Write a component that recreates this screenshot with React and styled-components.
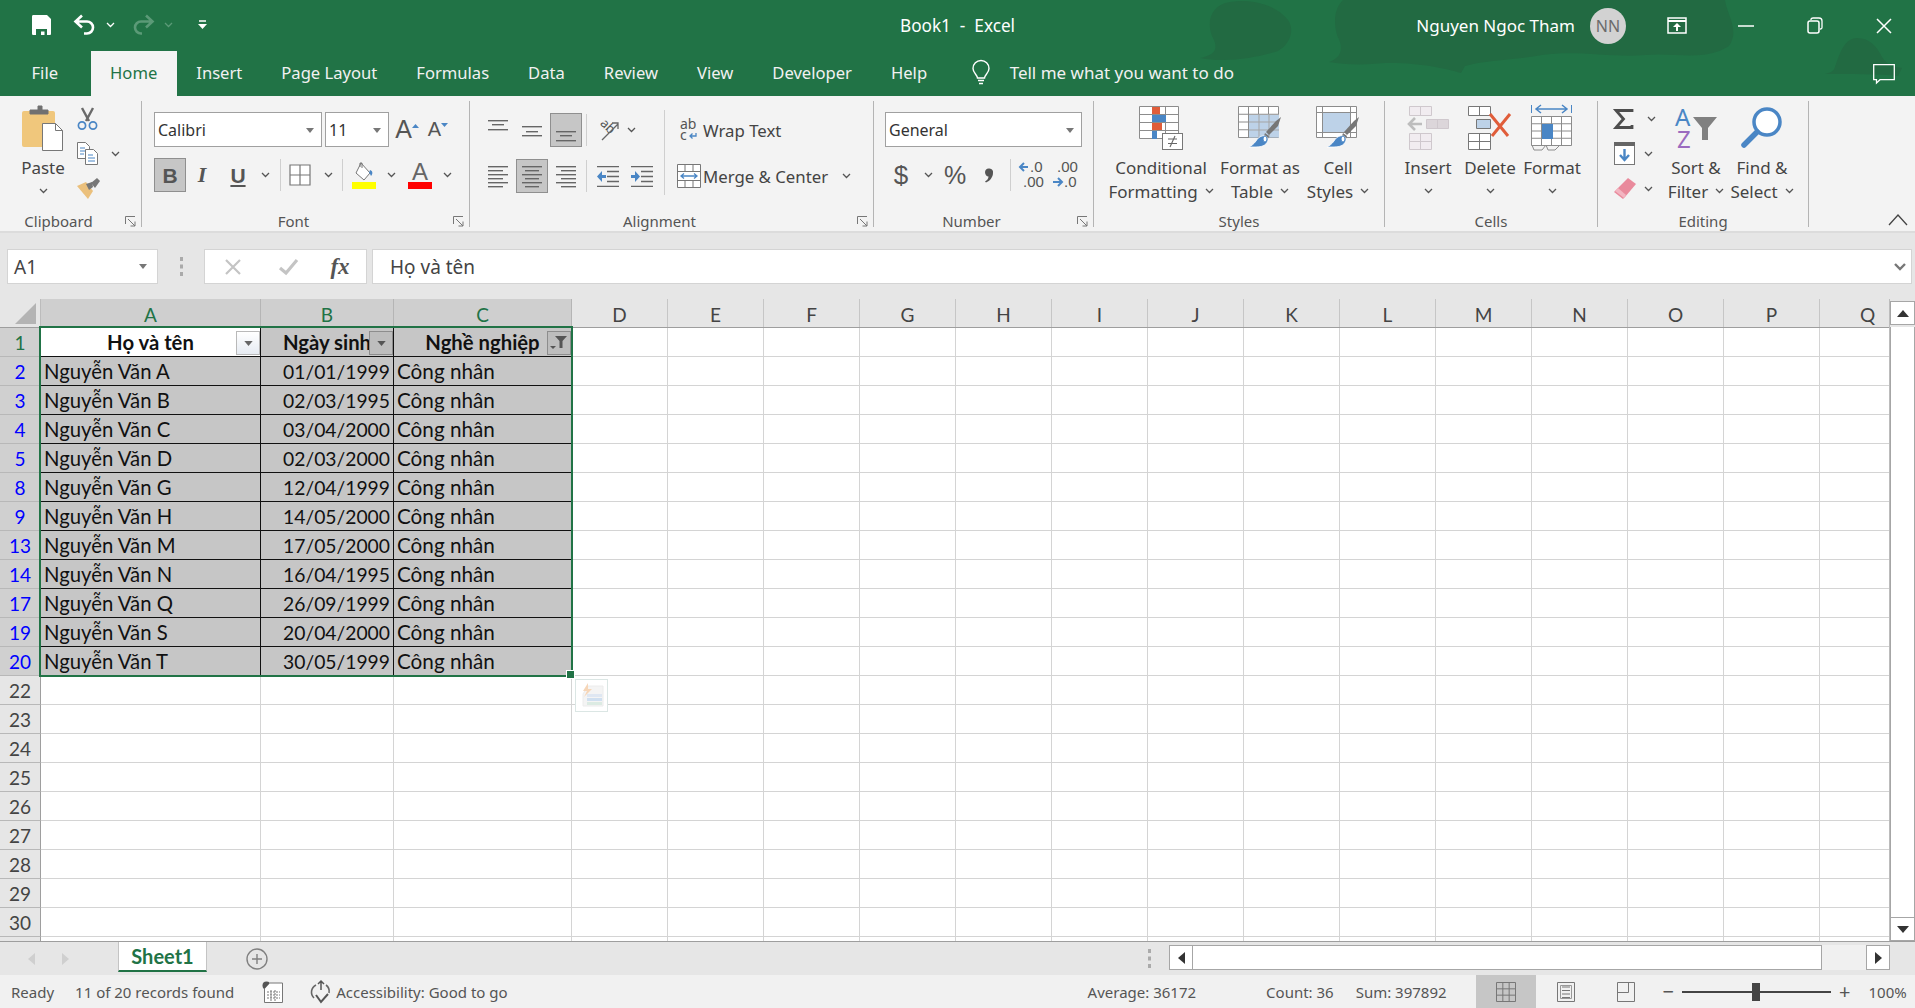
import React from "react";
import styled, { createGlobalStyle } from "styled-components";

const GlobalStyle = createGlobalStyle`
  html, body { margin: 0; padding: 0; width: 1915px; height: 1008px; overflow: hidden; }
  body { font-family: "Noto Sans", "Open Sans", sans-serif; color: #444; }
  svg { overflow: visible; }
`;

const Page = styled.div`
  width: 1915px;
  height: 1008px;
  display: flex;
  flex-direction: column;
  background: #e6e6e6;
  overflow: hidden;
`;

/* ---------- title bar + tabs ---------- */
const Head = styled.header`
  position: relative;
  height: 96px;
  background: #217346;
  color: #fff;
  flex: none;
`;
const HeadArt = styled.svg`
  position: absolute;
  right: 0;
  top: 0;
`;
const TitleRow = styled.div`
  position: relative;
  height: 51px;
  display: grid;
  grid-template-columns: 1fr auto 1fr;
  align-items: center;
`;
const Qat = styled.div`
  display: flex;
  align-items: center;
  padding-left: 32px;
  margin-top: -2px;
`;
const Title = styled.div`
  font-size: 17.2px;
  white-space: pre;
`;
const Account = styled.div`
  display: flex;
  align-items: center;
  justify-content: flex-end;
  padding-right: 1px;
`;
const UserName = styled.span`
  font-size: 17px;
  margin-right: 15px;
`;
const Avatar = styled.div`
  width: 36px;
  height: 36px;
  border-radius: 50%;
  background: #d2d2d2;
  color: #6b6b6b;
  font-size: 16px;
  display: flex;
  align-items: center;
  justify-content: center;
  margin-right: 21px;
`;
const WinBtn = styled.div`
  width: 60px;
  display: flex;
  justify-content: center;
  margin-left: ${(p) => (p.$first ? 0 : 9)}px;
`;
const TabRow = styled.nav`
  position: relative;
  height: 45px;
  display: flex;
  align-items: stretch;
  padding-left: 12px;
`;
const Tab = styled.div`
  display: flex;
  align-items: center;
  padding: 0 19.5px 2px;
  font-size: 16.6px;
  margin-right: ${(p) => p.$gap || 0}px;
  background: ${(p) => (p.$active ? "#f3f3f3" : "transparent")};
  color: ${(p) => (p.$active ? "#217346" : "#f1f1f1")};
`;
const TellMe = styled.div`
  display: flex;
  align-items: center;
  gap: 19px;
  margin-left: 24px;
  padding-bottom: 2px;
  font-size: 17px;
  color: #f1f1f1;
`;
const CommentBtn = styled.div`
  margin-left: auto;
  padding-right: 20px;
  display: flex;
  align-items: center;
`;

/* ---------- ribbon ---------- */
const Ribbon = styled.section`
  height: 137px;
  flex: none;
  display: flex;
  padding-top: 5px;
  box-sizing: border-box;
  background: #f3f3f3;
  border-bottom: 2px solid #dcdcdc;
  font-size: 17px;
  color: #444;
`;
const Group = styled.div`
  width: ${(p) => p.$w}px;
  height: 126px;
  box-sizing: border-box;
  border-right: 1px solid #b4b4b4;
  display: flex;
  flex-direction: column;
  flex: none;
`;
const GroupBody = styled.div`
  flex: 1;
  display: flex;
  min-height: 0;
  padding-left: ${(p) => p.$pad || 0}px;
`;
const GroupFoot = styled.div`
  height: 14px;
  display: grid;
  grid-template-columns: 1fr ${(p) => (p.$launch ? 24 : 0)}px;
  align-items: center;
  justify-items: center;
  font-size: 15px;
  color: #555;
  line-height: 14px;
  margin-bottom: -1px;
`;
const Launcher = styled.svg`
  justify-self: end;
  margin-right: 5px;
`;
const Big = styled.div`
  width: ${(p) => p.$w}px;
  margin-left: ${(p) => p.$ml || 0}px;
  display: flex;
  flex-direction: column;
  align-items: center;
  flex: none;
`;
const BigIcon = styled.div`
  height: 54px;
  display: flex;
  align-items: center;
  justify-content: center;
`;
const BigLine = styled.div`
  height: 24px;
  display: flex;
  align-items: center;
  gap: 7px;
  white-space: nowrap;
`;
const SmallCol = styled.div`
  width: ${(p) => p.$w}px;
  margin-left: ${(p) => p.$ml || 0}px;
  flex: none;
  display: flex;
  flex-direction: column;
`;
const SmallRow = styled.div`
  height: 35px;
  display: flex;
  align-items: center;
`;
const Slot = styled.div`
  width: ${(p) => p.$w}px;
  display: flex;
  justify-content: center;
  flex: none;
`;
const Stack = styled.div`
  display: flex;
  flex-direction: column;
  gap: 12px;
  padding-top: ${(p) => p.$top ?? 11}px;
`;
const ToolRow = styled.div`
  height: 34px;
  display: flex;
  align-items: center;
  white-space: nowrap;
`;
const Field = styled.div`
  box-sizing: border-box;
  width: ${(p) => p.$w}px;
  height: 35px;
  margin-right: ${(p) => p.$mr || 0}px;
  background: #fff;
  border: 1px solid #a0a0a0;
  display: flex;
  align-items: center;
  justify-content: space-between;
  padding: 2px 7px 0 3px;
  font-size: 16px;
  color: #333;
  flex: none;
`;
const Tool = styled.div`
  box-sizing: border-box;
  width: ${(p) => p.$w || 32}px;
  height: 34px;
  margin-right: ${(p) => p.$mr || 0}px;
  display: flex;
  align-items: center;
  justify-content: center;
  flex: none;
  background: ${(p) => (p.$on ? "#c6c6c6" : "transparent")};
  border: ${(p) => (p.$on ? "1px solid #8f8f8f" : "none")};
`;
const Glyph = styled.span`
  font-family: ${(p) => p.$font || `"Liberation Sans", sans-serif`};
  font-size: ${(p) => p.$size}px;
  font-weight: ${(p) => p.$weight || 400};
  font-style: ${(p) => p.$slant || "normal"};
  text-decoration: ${(p) => p.$deco || "none"};
  color: #555;
  line-height: 1;
`;
const Sep = styled.div`
  width: 1px;
  height: ${(p) => p.$h || 32}px;
  background: #cfcfcf;
  margin: 0 ${(p) => p.$mr ?? 5}px 0 ${(p) => p.$ml ?? 5}px;
  flex: none;
`;
const TallSep = styled.div`
  width: 1px;
  height: 85px;
  margin: 9px ${(p) => p.$mr}px 0 ${(p) => p.$ml}px;
  background: #cfcfcf;
  flex: none;
`;
const ToolLabel = styled.span`
  font-size: 16.8px;
  color: #444;
  margin-right: ${(p) => p.$mr || 0}px;
`;
const Collapse = styled.div`
  flex: 1;
  display: flex;
  align-items: flex-end;
  justify-content: flex-end;
  padding-right: 7px;
  height: 125px;
`;

/* ---------- formula bar ---------- */
const FormulaBar = styled.div`
  height: 66px;
  flex: none;
  box-sizing: border-box;
  padding: 16px 3px 0 7px;
  display: flex;
  align-items: flex-start;
  background: #e6e6e6;
`;
const NameBox = styled.div`
  box-sizing: border-box;
  width: 151px;
  height: 35px;
  background: #fff;
  border: 1px solid #d4d4d4;
  display: flex;
  align-items: center;
  justify-content: space-between;
  padding: 0 10px 0 6px;
  font-size: 19px;
  color: #444;
`;
const Dots = styled.div`
  width: 46px;
  height: 35px;
  display: flex;
  align-items: center;
  justify-content: center;
`;
const FnBox = styled.div`
  box-sizing: border-box;
  width: 163px;
  height: 35px;
  background: #fff;
  border: 1px solid #d4d4d4;
  display: flex;
  align-items: center;
  margin-right: 5px;
`;
const FormulaInput = styled.div`
  flex: 1;
  box-sizing: border-box;
  height: 35px;
  background: #fff;
  border: 1px solid #d4d4d4;
  display: flex;
  align-items: center;
  justify-content: space-between;
  padding: 0 5px 0 17px;
  font-size: 19px;
  color: #444;
`;

/* ---------- sheet ---------- */
const COLS = "41px 220px 133px 178px repeat(14, 96px)";
const SheetArea = styled.div`
  height: 642px;
  flex: none;
  display: flex;
  border-bottom: 1px solid #9e9e9e;
  box-sizing: content-box;
`;
const Grid = styled.div`
  position: relative;
  width: 1890px;
  height: 642px;
  overflow: hidden;
  background: #fff;
  font-family: Lato, "Noto Sans", sans-serif;
  font-size: 20.7px;
  color: #111;
  border-right: 1px solid #bcbcbc;
  box-sizing: border-box;
`;
const HeadRow = styled.div`
  display: grid;
  grid-template-columns: ${COLS};
  height: 28px;
  background: #e6e6e6;
  border-bottom: 1px solid #9e9e9e;
  box-sizing: content-box;
  margin-bottom: -1px;
`;
const Corner = styled.div`
  border-right: 1px solid #bcbcbc;
  display: flex;
  align-items: flex-end;
  justify-content: flex-end;
  padding: 0 4px 3px 0;
`;
const ColHead = styled.div`
  display: flex;
  align-items: center;
  justify-content: center;
  padding-top: 3px;
  box-sizing: border-box;
  font-size: 19px;
  background: ${(p) => (p.$sel ? "#cfcfcf" : "#e6e6e6")};
  color: ${(p) => (p.$sel ? "#217346" : "#444")};
  border-right: 1px solid ${(p) => (p.$sel ? "#b5b5b5" : "#c6c6c6")};
`;
const HeadGap = styled.div`
  height: 1px;
`;
const Row = styled.div`
  display: grid;
  grid-template-columns: ${COLS};
  height: 29px;
`;
const RowHead = styled.div`
  box-sizing: border-box;
  display: flex;
  align-items: center;
  justify-content: center;
  font-size: 19px;
  background: ${(p) => (p.$sel ? "#d0d0d0" : "#e6e6e6")};
  color: ${(p) => p.$color || "#444"};
  border-right: 1px solid #9e9e9e;
  border-bottom: 1px solid #b8b8b8;
`;
const Cell = styled.div`
  position: relative;
  box-sizing: border-box;
  display: flex;
  align-items: center;
  overflow: hidden;
  white-space: pre;
  padding: 0 3px;
  justify-content: ${(p) => p.$align || "flex-start"};
  font-size: ${(p) => (p.$size ? `${p.$size}px` : "inherit")};
  font-weight: ${(p) => (p.$bold ? 700 : 400)};
  background: ${(p) => (p.$fill ? "#c6c6c6" : "#fff")};
  border-right: 1px solid ${(p) => (p.$ink ? "#111" : "#d4d4d4")};
  border-bottom: 1px solid ${(p) => (p.$ink ? "#111" : "#d4d4d4")};
`;
const FilterBtn = styled.div`
  position: absolute;
  right: 0;
  top: 3px;
  width: 24px;
  height: 24px;
  box-sizing: border-box;
  display: flex;
  align-items: center;
  justify-content: center;
  background: ${(p) => (p.$on ? "#bdbdbd" : "linear-gradient(#fff, #e6ebf2)")};
  border: 1px solid ${(p) => (p.$on ? "#8d8d8d" : "#b9b9b9")};
`;
const SelectionBox = styled.div`
  position: absolute;
  left: 39px;
  top: 27px;
  width: 534px;
  height: 351px;
  box-sizing: border-box;
  border: 2px solid #217346;
  pointer-events: none;
`;
const SelectionHandle = styled.div`
  position: absolute;
  right: -4px;
  bottom: -4px;
  width: 7px;
  height: 7px;
  background: #217346;
  border: 1px solid #fff;
`;
const QuickBtn = styled.div`
  position: absolute;
  left: 575px;
  top: 380px;
  width: 33px;
  height: 33px;
  box-sizing: border-box;
  background: #fff;
  border: 1px solid #dbe6e4;
  display: flex;
  align-items: center;
  justify-content: center;
`;
const VScroll = styled.div`
  flex: 1;
  display: flex;
  flex-direction: column;
  justify-content: space-between;
  padding-top: 2px;
  background: #e6e6e6;
`;
const VButton = styled.div`
  box-sizing: border-box;
  height: 24px;
  background: #fff;
  border: 1px solid #a6a6a6;
  display: flex;
  align-items: center;
  justify-content: center;
`;
const VThumb = styled.div`
  flex: 1;
  background: #fff;
  border: 1px solid #a6a6a6;
  border-top: none;
  border-bottom: none;
  margin-top: 2px;
`;

/* ---------- sheet tabs + status ---------- */
const TabBar = styled.div`
  height: 33px;
  flex: none;
  display: flex;
  align-items: stretch;
  background: #e6e6e6;
`;
const TabNav = styled.div`
  width: 118px;
  display: flex;
  align-items: center;
  gap: 27px;
  padding-left: 28px;
  box-sizing: border-box;
`;
const SheetTab = styled.div`
  width: 89px;
  height: 30px;
  box-sizing: border-box;
  background: #fff;
  border-left: 1px solid #c4c4c4;
  border-right: 1px solid #c4c4c4;
  border-bottom: 2px solid #217346;
  color: #217346;
  font-family: Lato, "Noto Sans", sans-serif;
  font-weight: 700;
  font-size: 20px;
  display: flex;
  align-items: center;
  justify-content: center;
`;
const AddSheet = styled.div`
  margin-left: 39px;
  display: flex;
  align-items: center;
`;
const Splitter = styled.div`
  margin-left: auto;
  margin-right: 10px;
  width: 20px;
  display: flex;
  align-items: center;
  justify-content: center;
`;
const HScroll = styled.div`
  width: 721px;
  margin: 3px 25px 5px 0;
  display: flex;
  background: #f0f0f0;
`;
const HButton = styled.div`
  box-sizing: border-box;
  width: 24px;
  background: #fff;
  border: 1px solid #a6a6a6;
  display: flex;
  align-items: center;
  justify-content: center;
  margin-left: ${(p) => (p.$end ? "auto" : 0)};
`;
const HThumb = styled.div`
  box-sizing: border-box;
  width: 629px;
  background: #fff;
  border: 1px solid #a6a6a6;
  border-left: none;
`;
const Status = styled.footer`
  height: 33px;
  flex: none;
  display: flex;
  align-items: center;
  background: #f1f1f1;
  font-size: 15px;
  color: #555;
  white-space: nowrap;
`;
const StatusText = styled.span`
  margin-left: ${(p) => p.$ml}px;
  flex: none;
`;
const StatusIcon = styled.div`
  margin-left: ${(p) => p.$ml}px;
  display: flex;
  align-items: center;
  flex: none;
`;
const ViewBtn = styled.div`
  width: 60px;
  height: 33px;
  margin-left: ${(p) => p.$ml || 0}px;
  display: flex;
  align-items: center;
  justify-content: center;
  flex: none;
  background: ${(p) => (p.$on ? "#c6c6c6" : "transparent")};
`;
const Zoom = styled.div`
  position: relative;
  width: 149px;
  height: 2px;
  background: #444;
  margin: 0 8px;
  flex: none;
`;
const ZoomKnob = styled.div`
  position: absolute;
  left: 70px;
  top: -8px;
  width: 8px;
  height: 18px;
  background: #444;
`;
const ZoomSign = styled.span`
  font-size: 20px;
  line-height: 1;
  margin-left: ${(p) => p.$ml || 0}px;
  flex: none;
`;

/* ---------- icons ---------- */
const BLUE = "#4a86c5";

const Chev = ({ color = "#555" }) => (
  <svg width="9" height="6" viewBox="0 0 9 6">
    <path d="M1 1l3.500 3.500L8 1" fill="none" stroke={color} strokeWidth="1.300" />
  </svg>
);
const DropTri = ({ color = "#777", w = 8, h = 5 }) => (
  <svg width={w} height={h} viewBox="0 0 10 6">
    <path d="M0 0h10L5 6z" fill={color} />
  </svg>
);
const Lines = ({ rows, w = 20, h = 21, color = "#666" }) => (
  <svg width={w} height={h} viewBox={`0 0 ${w} ${h}`}>
    {rows.map(([a, b, y]) => (
      <rect key={y} x={a} y={y} width={b - a} height="1.400" fill={color} />
    ))}
  </svg>
);
const LaunchIcon = () => (
  <Launcher width="11" height="11" viewBox="0 0 11 11">
    <path d="M.5 8V.5H10M3 3l7 7M10 5.500V10H5.500" fill="none" stroke="#777" />
  </Launcher>
);
const grid = (x, y, w, h, cols, rows) => {
  let d = `M${x} ${y}h${w}v${h}h${-w}z`;
  for (let i = 1; i < cols; i++) d += `M${x + (w / cols) * i} ${y}v${h}`;
  for (let i = 1; i < rows; i++) d += `M${x} ${y + (h / rows) * i}h${w}`;
  return d;
};

const SaveIcon = () => (
  <svg width="19" height="20" viewBox="0 0 19 20">
    <path d="M0 1.500C0 .5.5 0 1.500 0H15l4 4v14.500c0 1-.5 1.500-1.500 1.500h-16C.5 20 0 19.500 0 18.500z" fill="#fff" />
    <path d="M4 20v-6h11v6h-2.500v-3.500H9V20z" fill="#217346" />
  </svg>
);
const UndoIcon = ({ color = "#fff" }) => (
  <svg width="23" height="21" viewBox="0 0 23 21">
    <path d="M9 1.500L2.500 7.500 9 13.500M3 7.500h11a6 6 0 0 1 0 12h-3" fill="none" stroke={color} strokeWidth="2.600" />
  </svg>
);
const RedoIcon = () => (
  <svg width="23" height="21" viewBox="0 0 23 21">
    <path d="M14 1.500l6.500 6-6.500 6M20 7.500H9a6 6 0 0 0 0 12h1" fill="none" stroke="#5b9a77" strokeWidth="2.600" />
  </svg>
);
const CustomizeIcon = () => (
  <svg width="9" height="10" viewBox="0 0 9 10">
    <path d="M1 1h7" stroke="#fff" strokeWidth="1.500" />
    <path d="M0 4h9L4.500 9z" fill="#fff" />
  </svg>
);
const BulbIcon = () => (
  <svg width="20" height="25" viewBox="0 0 20 25">
    <path d="M6.500 18c0-3-4.500-5-4.500-9.500a8 8 0 0 1 16 0C18 13 13.500 15 13.500 18z" fill="none" stroke="#fff" strokeWidth="1.400" />
    <path d="M7 20.500h6M8 23.500h4" stroke="#fff" strokeWidth="1.600" />
  </svg>
);
const RibbonDisplayIcon = () => (
  <svg width="20" height="17" viewBox="0 0 20 17">
    <path d="M1 1h18v15H1z" fill="none" stroke="#fff" strokeWidth="1.500" />
    <path d="M1 4h18" stroke="#fff" strokeWidth="2" />
    <path d="M10 6l4 4h-3v4H9v-4H6z" fill="#fff" />
  </svg>
);
const MinIcon = () => (
  <svg width="16" height="16" viewBox="0 0 16 16">
    <path d="M0 8h16" stroke="#fff" strokeWidth="1.500" />
  </svg>
);
const MaxIcon = () => (
  <svg width="16" height="17" viewBox="0 0 16 17">
    <path d="M4 3V2.500C4 1.500 5 1 6 1h6c2 0 3 1 3 3v6.500c0 1-.5 1.500-1.500 1.500H13" fill="none" stroke="#fff" strokeWidth="1.300" />
    <rect x="1" y="4" width="11" height="12" rx="2" fill="none" stroke="#fff" strokeWidth="1.500" />
  </svg>
);
const CloseIcon = () => (
  <svg width="16" height="16" viewBox="0 0 16 16">
    <path d="M1 1l14 14M15 1L1 15" stroke="#fff" strokeWidth="1.500" />
  </svg>
);
const CommentIcon = () => (
  <svg width="22" height="20" viewBox="0 0 22 20">
    <path d="M.7.700h20.600v15H7L3.500 19v-3.300H.7z" fill="none" stroke="#fff" strokeWidth="1.300" />
  </svg>
);
const PasteIcon = () => (
  <svg width="42" height="46" viewBox="0 0 42 46">
    <rect x="0" y="6" width="33" height="36" rx="2" fill="#f0c77c" />
    <path d="M8 9V5h8V1h4v4h6v4z" fill="#707070" stroke="#707070" />
    <path d="M20.500 18.500h13l7 7v20h-20z" fill="#fff" stroke="#777" />
    <path d="M33.500 18.500v7h7" fill="none" stroke="#777" />
  </svg>
);
const ScissorsIcon = () => (
  <svg width="21" height="22" viewBox="0 0 21 22">
    <path d="M5 0l7 13M16 0L9 13" stroke="#6a6a6a" strokeWidth="2.400" />
    <circle cx="5" cy="17.500" r="3.600" fill="none" stroke={BLUE} strokeWidth="1.700" />
    <circle cx="16" cy="17.500" r="3.600" fill="none" stroke={BLUE} strokeWidth="1.700" />
  </svg>
);
const CopyIcon = () => (
  <svg width="21" height="23" viewBox="0 0 21 23">
    <path d="M.5.500h8l4 4v12H.5z" fill="#fff" stroke="#777" />
    <path d="M8.500 7.500h8l4 4v11h-12z" fill="#fff" stroke="#777" />
    <path d="M3 6h5M3 9h5M3 12h4M11 13h5M11 16h7M11 19h7" stroke={BLUE} />
  </svg>
);
const PainterIcon = () => (
  <svg width="24" height="21" viewBox="0 0 24 21">
    <path d="M0 8l9-4 7 9-5 8z" fill="#ebc07c" />
    <path d="M9 6l6-2 1 5-4 3z" fill="#777" />
    <path d="M14 5l6-5 3 3-5 7z" fill="#777" />
  </svg>
);
const BordersIcon = () => (
  <svg width="22" height="22" viewBox="0 0 22 22">
    <path d={grid(1, 1, 20, 20, 2, 2)} fill="#fff" stroke="#777" strokeWidth="1.200" />
  </svg>
);
const FillIcon = () => (
  <svg width="24" height="27" viewBox="0 0 24 27">
    <path d="M9 1l9 10-6 7-8-7z" fill="#fff" stroke="#777" />
    <path d="M8 5V1h2v5" fill="none" stroke="#777" />
    <path d="M18 8c3 1 3 4 1 6-1-2-1-3-2-3z" fill={BLUE} />
    <rect y="20" width="24" height="7" fill="#ffff00" />
  </svg>
);
const FontColorIcon = () => (
  <svg width="24" height="28" viewBox="0 0 24 28">
    <text x="12" y="19" textAnchor="middle" fontSize="24" fill="#666" fontFamily="Liberation Sans">A</text>
    <rect y="21" width="24" height="7" fill="#f00" />
  </svg>
);
const OrientIcon = () => (
  <svg width="24" height="24" viewBox="0 0 24 24">
    <text x="2" y="9" fontSize="13" fill="#555" fontFamily="Noto Sans" transform="rotate(45 6 8)">ab</text>
    <path d="M5 22L21 6M15 5h6v6" fill="none" stroke="#666" strokeWidth="1.300" />
  </svg>
);
const WrapIcon = () => (
  <svg width="18" height="22" viewBox="0 0 18 22">
    <text x="0" y="10" fontSize="14" fill="#555" fontFamily="Noto Sans">ab</text>
    <text x="0" y="21" fontSize="14" fill="#555" fontFamily="Noto Sans">c</text>
    <path d="M16 14v3H10M12.500 14.500L10 17l2.500 2.500" fill="none" stroke={BLUE} strokeWidth="1.300" />
  </svg>
);
const MergeIcon = () => (
  <svg width="24" height="24" viewBox="0 0 24 24">
    <path d="M.5.500h23v23H.5zM.5 7.500h23M.5 16.500h23M8 .5v7M16 .5v7M8 16.500v7M16 16.500v7" fill="#fff" stroke="#777" />
    <path d="M4 12h16M7 9.500L4 12l3 2.500M17 9.500l3 2.500-3 2.500" fill="none" stroke={BLUE} strokeWidth="1.300" />
  </svg>
);
const IndentIcon = ({ out }) => (
  <svg width="22" height="21" viewBox="0 0 22 21">
    <path d="M0 .7h22M10 5.500h12M10 10.500h12M10 15.500h12M0 20.300h22" stroke="#666" strokeWidth="1.300" />
    <path d={out ? "M9 9H5V5L0 10.500 5 16v-4h4z" : "M0 9h4V5l5 5.500-5 5.500v-4H0z"} fill={BLUE} />
  </svg>
);
const CommaIcon = () => (
  <svg width="10" height="16" viewBox="0 0 10 16">
    <path d="M1 5a4 4 0 1 1 8 1c0 4-3 8-7 9.500l-1-1c2-1 3.500-3 3.500-5C2.500 9.500 1 7.500 1 5z" fill="#555" />
  </svg>
);
const DecIcon = ({ up }) => (
  <svg width="28" height="30" viewBox="0 0 28 30" fontFamily="Liberation Sans" fontSize="15" fill="#555">
    {up ? (
      <>
        <path d="M7 3L3 7l4 4M3 7h8" fill="none" stroke={BLUE} strokeWidth="2" />
        <text x="13" y="12">.0</text>
        <text x="6" y="27">.00</text>
      </>
    ) : (
      <>
        <text x="6" y="12">.00</text>
        <path d="M2 22h8M7 18l4 4-4 4" fill="none" stroke={BLUE} strokeWidth="2" />
        <text x="13" y="27">.0</text>
      </>
    )}
  </svg>
);
const CondIcon = () => (
  <svg width="44" height="44" viewBox="0 0 44 44">
    <path d={grid(.5, .5, 39, 32, 3, 4)} fill="#fff" stroke="#8c8c8c" />
    <rect x="13" y="1" width="8" height="7" fill="#e05d3a" />
    <rect x="13" y="9" width="14" height="7" fill={BLUE} />
    <rect x="13" y="17" width="10" height="7" fill="#e05d3a" />
    <rect x="13" y="25" width="5" height="8" fill={BLUE} />
    <rect x="23.500" y="27.500" width="20" height="16" fill="#fff" stroke="#777" />
    <path d="M29 33h9M29 37.500h9M36 30l-5 11" fill="none" stroke="#666" strokeWidth="1.100" />
  </svg>
);
const Brush = () => (
  <>
    <path d="M43 11l-3 9-9 9-3-3 10-11z" fill="#777" />
    <path d="M27 27l4 3-1 3-4-3z" fill="#777" />
    <path d="M24 30c3-1 6 1 6 4-1 4-4 7-12 7H11c2-1 5-3 7-6s3-4 6-5z" fill={BLUE} stroke="#fff" strokeWidth=".8" />
    <ellipse cx="27" cy="33" rx="2" ry="3" fill="#fff" stroke={BLUE} />
  </>
);
const TableIcon = () => (
  <svg width="45" height="44" viewBox="0 0 45 44">
    <path d={grid(.5, .5, 40, 31, 4, 4)} fill="#fff" stroke="#8c8c8c" />
    <path d="M11 8.500h30v23H11z" fill="#bdd2e8" />
    <path d="M11 8.500h30M11 16h30M11 24h30M21 8.500v23M31 8.500v23" stroke="#a5a5a5" />
    <Brush />
  </svg>
);
const CellStyleIcon = () => (
  <svg width="45" height="44" viewBox="0 0 45 44">
    <path d="M.5.500h40v31H.5zM.5 6.500h40M6.500.5v31M34.500.5v31M.5 26.500h40" fill="#fff" stroke="#8c8c8c" />
    <rect x="7" y="7" width="27" height="19" fill="#bdd2e8" />
    <Brush />
  </svg>
);
const InsertIcon = () => (
  <svg width="44" height="44" viewBox="0 0 44 44">
    <path d={grid(3.5, .5, 22, 9, 2, 1)} fill="#f1ecf0" stroke="#cfc8cd" />
    <path d={grid(3.5, 27.500, 22, 16, 2, 2)} fill="#f1ecf0" stroke="#cfc8cd" />
    <path d={grid(20.500, 13.500, 22, 9, 2, 1)} fill="#dcd6da" stroke="#cfc8cd" />
    <path d="M16 18H3M9 12l-6 6 6 6" fill="none" stroke="#bdbdbd" strokeWidth="2.600" />
  </svg>
);
const DeleteIcon = () => (
  <svg width="44" height="44" viewBox="0 0 44 44">
    <path d={grid(.5, .5, 22, 9, 2, 1)} fill="#fff" stroke="#777" />
    <path d={grid(.5, 27.500, 22, 16, 2, 2)} fill="#fff" stroke="#777" />
    <path d="M8.500 13.500h14v9h-14z" fill="#bdd2e8" stroke="#777" />
    <path d="M22 8l18 22M42 8L24 30" stroke="#e05d3a" strokeWidth="3" />
  </svg>
);
const FormatIcon = () => (
  <svg width="42" height="46" viewBox="0 0 42 46">
    <path d="M.5 0v8M40.500 0v8" stroke={BLUE} />
    <path d="M5 4h31M10 0L5 4l5 4M31 0l5 4-5 4" fill="none" stroke={BLUE} strokeWidth="1.500" />
    <path d={grid(.5, 11.500, 40, 29, 4, 4)} fill="#fff" stroke="#8c8c8c" />
    <rect x="11" y="19" width="11" height="15" fill={BLUE} />
    <path d="M1 40l2 5h8l4-5M15 40l2 5h7l5-5" fill="none" stroke="#8c8c8c" />
  </svg>
);
const SigmaIcon = () => (
  <svg width="19" height="20" viewBox="0 0 19 20">
    <path d="M18 3V1.500H2L9.500 10 2 18.500h16V16" fill="none" stroke="#4d4d4d" strokeWidth="2.800" />
  </svg>
);
const FillDownIcon = () => (
  <svg width="21" height="23" viewBox="0 0 21 23">
    <rect x=".5" y=".5" width="20" height="22" fill="#fff" stroke="#777" />
    <rect width="21" height="4" fill="#666" />
    <path d="M10.500 7v10M6 13l4.500 5 4.500-5" fill="none" stroke={BLUE} strokeWidth="2.400" />
  </svg>
);
const EraserIcon = () => (
  <svg width="22" height="21" viewBox="0 0 22 21">
    <path d="M14 0l8 6-11 13-2 2-9-7z" fill="#e98a9c" />
    <path d="M4 10l8 7-2 3-9-7z" fill="#f3b5c1" />
  </svg>
);
const SortIcon = () => (
  <svg width="43" height="42" viewBox="0 0 43 42" fontFamily="Noto Sans" fontSize="24">
    <text x="0" y="19" fill={BLUE}>A</text>
    <text x="2" y="41" fill="#9b6bbf">Z</text>
    <path d="M18 10h24l-9 11v12h-6V21z" fill="#808080" />
  </svg>
);
const FindIcon = () => (
  <svg width="42" height="42" viewBox="0 0 42 42">
    <circle cx="26" cy="15" r="13" fill="#fff" stroke={BLUE} strokeWidth="3.500" />
    <path d="M16 25L3 38" stroke={BLUE} strokeWidth="5.500" strokeLinecap="round" />
  </svg>
);
const CaretUp = () => (
  <svg width="20" height="12" viewBox="0 0 20 12">
    <path d="M1 11l9-10 9 10" fill="none" stroke="#444" strokeWidth="1.300" />
  </svg>
);
const ThreeDots = ({ color = "#aaa" }) => (
  <svg width="3" height="19" viewBox="0 0 3 19">
    <path d="M0 0h3v4H0zM0 7.500h3v4H0zM0 15h3v4H0z" fill={color} />
  </svg>
);
const CancelMark = () => (
  <svg width="16" height="16" viewBox="0 0 16 16">
    <path d="M1 1l14 14M15 1L1 15" stroke="#c4c4c4" strokeWidth="2.200" />
  </svg>
);
const CheckMark = () => (
  <svg width="19" height="16" viewBox="0 0 19 16">
    <path d="M1 9l6 5L18 1" fill="none" stroke="#c4c4c4" strokeWidth="3.200" />
  </svg>
);
const Funnel = () => (
  <svg width="18" height="16" viewBox="0 0 18 16">
    <path d="M5 1h12l-4.500 5v7h-3V6z" fill="#555" />
    <path d="M0 11h6l-3 3z" fill="#555" />
  </svg>
);
const QuickIcon = () => (
  <svg width="24" height="26" viewBox="0 0 24 26">
    <path d="M8 3h15v20H3V11z" fill="#f4f4f4" stroke="#ececec" />
    <path d="M8 0L3 8h4l-3 6 8-8H8z" fill="#f6d6b8" />
    <rect x="7" y="11" width="15" height="3" fill="#dfe7f2" />
    <rect x="7" y="15" width="15" height="3" fill="#cfdff0" />
    <rect x="7" y="19" width="15" height="3" fill="#dcebe3" />
  </svg>
);
const TriLeft = ({ color = "#333" }) => (
  <svg width="7" height="12" viewBox="0 0 7 12">
    <path d="M7 0v12L0 6z" fill={color} />
  </svg>
);
const TriRight = ({ color = "#333" }) => (
  <svg width="7" height="12" viewBox="0 0 7 12">
    <path d="M0 0v12l7-6z" fill={color} />
  </svg>
);
const TriUp = () => (
  <svg width="12" height="7" viewBox="0 0 12 7">
    <path d="M0 7h12L6 0z" fill="#333" />
  </svg>
);
const TriDown = () => (
  <svg width="12" height="7" viewBox="0 0 12 7">
    <path d="M0 0h12L6 7z" fill="#333" />
  </svg>
);
const PlusCircle = () => (
  <svg width="22" height="22" viewBox="0 0 22 22">
    <circle cx="11" cy="11" r="10" fill="none" stroke="#808080" strokeWidth="1.400" />
    <path d="M11 6v10M6 11h10" stroke="#808080" strokeWidth="1.400" />
  </svg>
);
const MacroIcon = () => (
  <svg width="21" height="22" viewBox="0 0 21 22">
    <circle cx="4.500" cy="4.500" r="4" fill="#555" />
    <path d="M8 2h12.500v19.500h-18V8" fill="#fff" stroke="#777" />
    <path d="M5 11h13M5 14h13M5 17h13M9 9v11M13 9v11" stroke="#777" strokeDasharray="2 1" />
  </svg>
);
const AccessIcon = () => (
  <svg width="20" height="22" viewBox="0 0 20 22">
    <path d="M5 4a8 8 0 0 0-2 13M15 4a8 8 0 0 1 3 8" fill="none" stroke="#666" strokeWidth="1.600" />
    <path d="M10 0v9M7 3l3-3 3 3" fill="none" stroke="#555" strokeWidth="1.500" />
    <path d="M5 14l5 7 7-8" fill="none" stroke="#555" strokeWidth="2" />
  </svg>
);
const NormalViewIcon = () => (
  <svg width="20" height="20" viewBox="0 0 20 20">
    <path d={grid(.5, .5, 19, 19, 3, 3)} fill="none" stroke="#777" />
  </svg>
);
const PageViewIcon = () => (
  <svg width="18" height="20" viewBox="0 0 18 20">
    <path d="M.5.500h17v19H.5z" fill="none" stroke="#777" />
    <path d="M5 5h8M5 8.500h8M5 12h8M5 15.500h8" stroke="#777" />
    <path d="M3.500 3.500h11v13h-11z" fill="none" stroke="#999" />
  </svg>
);
const BreakViewIcon = () => (
  <svg width="18" height="20" viewBox="0 0 18 20">
    <path d="M.5.500h17v19H.5zM.5 10.500h11V.5" fill="none" stroke="#777" />
  </svg>
);
const HeadArtwork = () => (
  <HeadArt width="720" height="96" viewBox="0 0 720 96">
    <g fill="#226a42">
      <path d="M5 58c14-3 18-8 14-18C10 24 15 5 35 2c22-4 46 3 58 18 7 10 2 24-10 31-22 7-52 12-78 7z" />
      <path d="M134 62C145 58 150 50 142 35 138 20 140 8 148 0H530C532 15 545 30 534 46 510 62 480 52 450 55 420 58 380 50 347 55 320 60 290 60 270 66L266 73C250 68 220 62 190 63 170 65 150 65 134 62z" />
      <path d="M630 74c5-1 9-3 10-7 5-15 10-29 22-29 13 0 20 9 25 19 5 8 12 10 20 11l-4 8c-18-2-48-2-73-2z" />
    </g>
  </HeadArt>
);

/* ---------- data ---------- */
const people = [
  [2, "A", "01/01/1999"],
  [3, "B", "02/03/1995"],
  [4, "C", "03/04/2000"],
  [5, "D", "02/03/2000"],
  [8, "G", "12/04/1999"],
  [9, "H", "14/05/2000"],
  [13, "M", "17/05/2000"],
  [14, "N", "16/04/1995"],
  [17, "Q", "26/09/1999"],
  [19, "S", "20/04/2000"],
  [20, "T", "30/05/1999"],
];
const restCols = "DEFGHIJKLMNOPQ".split("");
const emptyRows = [22, 23, 24, 25, 26, 27, 28, 29, 30, ""];
const tabs = ["Insert", "Page Layout", "Formulas", "Data", "Review", "View", "Developer", "Help"];

const Blanks = () => restCols.map((c) => <Cell key={c} />);

const Foot = ({ label, launch }) => (
  <GroupFoot $launch={launch}>
    <span>{label}</span>
    {launch && <LaunchIcon />}
  </GroupFoot>
);

const BigButton = ({ w, ml, icon, lines }) => (
  <Big $w={w} $ml={ml}>
    <BigIcon>{icon}</BigIcon>
    {lines.map((line, i) => (
      <BigLine key={i}>
        {line}
        {i === lines.length - 1 && <Chev />}
      </BigLine>
    ))}
  </Big>
);

export default function App() {
  return (
    <Page>
      <GlobalStyle />
      <Head>
        <HeadArtwork />
        <TitleRow>
          <Qat>
            <SaveIcon />
            <Slot $w={22} />
            <UndoIcon />
            <Slot $w={10} />
            <Chev color="#fff" />
            <Slot $w={17} />
            <RedoIcon />
            <Slot $w={9} />
            <Chev color="#5b9a77" />
            <Slot $w={25} />
            <CustomizeIcon />
          </Qat>
          <Title>{"Book1  -  Excel"}</Title>
          <Account>
            <UserName>Nguyen Ngoc Tham</UserName>
            <Avatar>NN</Avatar>
            <WinBtn $first>
              <RibbonDisplayIcon />
            </WinBtn>
            <WinBtn>
              <MinIcon />
            </WinBtn>
            <WinBtn>
              <MaxIcon />
            </WinBtn>
            <WinBtn>
              <CloseIcon />
            </WinBtn>
          </Account>
        </TitleRow>
        <TabRow>
          <Tab $gap={13}>File</Tab>
          <Tab $active>Home</Tab>
          {tabs.map((t) => (
            <Tab key={t}>{t}</Tab>
          ))}
          <TellMe>
            <BulbIcon />
            Tell me what you want to do
          </TellMe>
          <CommentBtn>
            <CommentIcon />
          </CommentBtn>
        </TabRow>
      </Head>

      <Ribbon>
        <Group $w={142}>
          <GroupBody $pad={18}>
            <BigButton w={50} icon={<PasteIcon />} lines={["Paste", ""]} />
            <SmallCol $w={60} $ml={9}>
              <SmallRow>
                <ScissorsIcon />
              </SmallRow>
              <SmallRow>
                <CopyIcon />
                <Slot $w={13} />
                <Chev />
              </SmallRow>
              <SmallRow>
                <PainterIcon />
              </SmallRow>
            </SmallCol>
          </GroupBody>
          <Foot label="Clipboard" launch />
        </Group>

        <Group $w={328}>
          <GroupBody $pad={12}>
            <Stack>
              <ToolRow>
                <Field $w={168} $mr={3}>
                  Calibri
                  <DropTri />
                </Field>
                <Field $w={64} $mr={3}>
                  11
                  <DropTri />
                </Field>
                <Tool $w={30}>
                  <Glyph $size={25}>A</Glyph>
                  <svg width="7" height="12" viewBox="0 0 7 12">
                    <path d="M0 5l3.500-4L7 5z" fill={BLUE} />
                  </svg>
                </Tool>
                <Tool $w={32}>
                  <Glyph $size={20}>A</Glyph>
                  <svg width="7" height="14" viewBox="0 0 7 14">
                    <path d="M0 1h7L3.500 5z" fill={BLUE} />
                  </svg>
                </Tool>
              </ToolRow>
              <ToolRow>
                <Tool $on>
                  <Glyph $size={21} $weight={700}>B</Glyph>
                </Tool>
                <Tool>
                  <Glyph $size={22} $weight={700} $slant="italic" $font={`"Liberation Serif", serif`}>I</Glyph>
                </Tool>
                <Tool $w={4} />
                <Tool>
                  <Glyph $size={21} $weight={700} $deco="underline">U</Glyph>
                </Tool>
                <Tool $w={22}>
                  <Chev />
                </Tool>
                <Sep $ml={4} $mr={0} />
                <Tool $w={38}>
                  <BordersIcon />
                </Tool>
                <Tool $w={18}>
                  <Chev />
                </Tool>
                <Sep $ml={5} $mr={0} />
                <Tool $w={42}>
                  <FillIcon />
                </Tool>
                <Tool $w={12}>
                  <Chev />
                </Tool>
                <Tool $w={46}>
                  <FontColorIcon />
                </Tool>
                <Tool $w={8}>
                  <Chev />
                </Tool>
              </ToolRow>
            </Stack>
          </GroupBody>
          <Foot label="Font" launch />
        </Group>

        <Group $w={404}>
          <GroupBody $pad={12}>
            <Stack $top={12}>
              <ToolRow>
                <Tool $mr={2}>
                  <Lines rows={[[0, 20, 0], [4, 16, 4], [0, 20, 9]]} />
                </Tool>
                <Tool $mr={2}>
                  <Lines rows={[[0, 20, 6], [4, 16, 11], [0, 20, 15]]} />
                </Tool>
                <Tool $on>
                  <Lines rows={[[0, 20, 11], [4, 16, 15], [0, 20, 20]]} />
                </Tool>
                <Sep $ml={4} $mr={6} />
                <Tool>
                  <OrientIcon />
                </Tool>
                <Tool $w={12}>
                  <Chev />
                </Tool>
              </ToolRow>
              <ToolRow>
                <Tool $mr={2}>
                  <Lines rows={[[0, 20, 0], [0, 15, 4], [0, 20, 8], [0, 15, 12], [0, 20, 16], [0, 15, 20]]} />
                </Tool>
                <Tool $mr={2} $on>
                  <Lines rows={[[0, 20, 0], [3, 17, 4], [0, 20, 8], [3, 17, 12], [0, 20, 16], [3, 17, 20]]} />
                </Tool>
                <Tool>
                  <Lines rows={[[0, 20, 0], [5, 20, 4], [0, 20, 8], [5, 20, 12], [0, 20, 16], [5, 20, 20]]} />
                </Tool>
                <Sep $ml={4} $mr={5} />
                <Tool>
                  <IndentIcon out />
                </Tool>
                <Tool $w={2} />
                <Tool>
                  <IndentIcon />
                </Tool>
              </ToolRow>
            </Stack>
            <TallSep $ml={6} $mr={10} />
            <Stack $top={12}>
              <ToolRow>
                <Slot $w={28}>
                  <WrapIcon />
                </Slot>
                <ToolLabel>Wrap Text</ToolLabel>
              </ToolRow>
              <ToolRow>
                <Slot $w={28}>
                  <MergeIcon />
                </Slot>
                <ToolLabel $mr={14}>{"Merge & Center"}</ToolLabel>
                <Chev />
              </ToolRow>
            </Stack>
          </GroupBody>
          <Foot label="Alignment" launch />
        </Group>

        <Group $w={220}>
          <GroupBody $pad={11}>
            <Stack>
              <ToolRow>
                <Field $w={197}>
                  General
                  <DropTri />
                </Field>
              </ToolRow>
              <ToolRow>
                <Tool>
                  <Glyph $size={26}>$</Glyph>
                </Tool>
                <Tool $w={22}>
                  <Chev />
                </Tool>
                <Tool $mr={2}>
                  <Glyph $size={25}>%</Glyph>
                </Tool>
                <Tool>
                  <CommaIcon />
                </Tool>
                <Sep />
                <Tool $w={30} $mr={4}>
                  <DecIcon up />
                </Tool>
                <Tool $w={30}>
                  <DecIcon />
                </Tool>
              </ToolRow>
            </Stack>
          </GroupBody>
          <Foot label="Number" launch />
        </Group>

        <Group $w={291}>
          <GroupBody $pad={21}>
            <BigButton w={92} icon={<CondIcon />} lines={["Conditional", "Formatting"]} />
            <BigButton w={80} ml={13} icon={<TableIcon />} lines={["Format as", "Table"]} />
            <BigButton w={64} ml={6} icon={<CellStyleIcon />} lines={["Cell", "Styles"]} />
          </GroupBody>
          <Foot label="Styles" />
        </Group>

        <Group $w={213}>
          <GroupBody $pad={12}>
            <BigButton w={62} icon={<InsertIcon />} lines={["Insert", ""]} />
            <BigButton w={62} icon={<DeleteIcon />} lines={["Delete", ""]} />
            <BigButton w={62} icon={<FormatIcon />} lines={["Format", ""]} />
          </GroupBody>
          <Foot label="Cells" />
        </Group>

        <Group $w={211}>
          <GroupBody $pad={16}>
            <SmallCol $w={49}>
              <SmallRow>
                <SigmaIcon />
                <Slot $w={14} />
                <Chev />
              </SmallRow>
              <SmallRow>
                <FillDownIcon />
                <Slot $w={9} />
                <Chev />
              </SmallRow>
              <SmallRow>
                <EraserIcon />
                <Slot $w={8} />
                <Chev />
              </SmallRow>
            </SmallCol>
            <BigButton w={66} icon={<SortIcon />} lines={["Sort &", "Filter"]} />
            <BigButton w={66} icon={<FindIcon />} lines={["Find &", "Select"]} />
          </GroupBody>
          <Foot label="Editing" />
        </Group>
        <Collapse>
          <CaretUp />
        </Collapse>
      </Ribbon>

      <FormulaBar>
        <NameBox>
          A1
          <DropTri />
        </NameBox>
        <Dots>
          <ThreeDots />
        </Dots>
        <FnBox>
          <Slot $w={56}>
            <CancelMark />
          </Slot>
          <Slot $w={54}>
            <CheckMark />
          </Slot>
          <Slot $w={50}>
            <Glyph $size={23} $slant="italic" $weight={700} $font={`"Liberation Serif", serif`}>fx</Glyph>
          </Slot>
        </FnBox>
        <FormulaInput>
          Họ và tên
          <svg width="12" height="8" viewBox="0 0 12 8">
            <path d="M1 1l5 5 5-5" fill="none" stroke="#777" strokeWidth="2.400" />
          </svg>
        </FormulaInput>
      </FormulaBar>

      <SheetArea>
        <Grid>
          <HeadRow>
            <Corner>
              <svg width="21" height="21" viewBox="0 0 21 21">
                <path d="M21 0v21H0z" fill="#b4b4b4" />
              </svg>
            </Corner>
            <ColHead $sel>A</ColHead>
            <ColHead $sel>B</ColHead>
            <ColHead $sel>C</ColHead>
            {restCols.map((c) => (
              <ColHead key={c}>{c}</ColHead>
            ))}
          </HeadRow>
          <HeadGap />
          <Row>
            <RowHead $sel $color="#217346">1</RowHead>
            <Cell $ink $bold $size={20.3} $align="center">
              Họ và tên
              <FilterBtn>
                <DropTri w={9} h={5} color="#666" />
              </FilterBtn>
            </Cell>
            <Cell $ink $fill $bold $size={20.3} $align="center">
              Ngày sinh
              <FilterBtn $on>
                <DropTri w={9} h={5} color="#555" />
              </FilterBtn>
            </Cell>
            <Cell $ink $fill $bold $size={20.3} $align="center">
              Nghề nghiệp
              <FilterBtn $on>
                <Funnel />
              </FilterBtn>
            </Cell>
            <Blanks />
          </Row>
          {people.map(([num, letter, date]) => (
            <Row key={num}>
              <RowHead $sel $color="#0000ff">{num}</RowHead>
              <Cell $ink $fill $size={20.3}>{`Nguyễn Văn ${letter}`}</Cell>
              <Cell $ink $fill $size={19.3} $align="flex-end">{date}</Cell>
              <Cell $ink $fill>Công nhân</Cell>
              <Blanks />
            </Row>
          ))}
          {emptyRows.map((num) => (
            <Row key={num}>
              <RowHead>{num}</RowHead>
              <Cell />
              <Cell />
              <Cell />
              <Blanks />
            </Row>
          ))}
          <SelectionBox>
            <SelectionHandle />
          </SelectionBox>
          <QuickBtn>
            <QuickIcon />
          </QuickBtn>
        </Grid>
        <VScroll>
          <VButton>
            <TriUp />
          </VButton>
          <VThumb />
          <VButton>
            <TriDown />
          </VButton>
        </VScroll>
      </SheetArea>

      <TabBar>
        <TabNav>
          <TriLeft color="#cfcfcf" />
          <TriRight color="#cfcfcf" />
        </TabNav>
        <SheetTab>Sheet1</SheetTab>
        <AddSheet>
          <PlusCircle />
        </AddSheet>
        <Splitter>
          <ThreeDots />
        </Splitter>
        <HScroll>
          <HButton>
            <TriLeft />
          </HButton>
          <HThumb />
          <HButton $end>
            <TriRight />
          </HButton>
        </HScroll>
      </TabBar>

      <Status>
        <StatusText $ml={11}>Ready</StatusText>
        <StatusText $ml={21}>11 of 20 records found</StatusText>
        <StatusIcon $ml={28}>
          <MacroIcon />
        </StatusIcon>
        <StatusIcon $ml={28}>
          <AccessIcon />
        </StatusIcon>
        <StatusText $ml={5}>Accessibility: Good to go</StatusText>
        <StatusText $ml={580}>Average: 36172</StatusText>
        <StatusText $ml={70}>Count: 36</StatusText>
        <StatusText $ml={22}>Sum: 397892</StatusText>
        <ViewBtn $on $ml={29}>
          <NormalViewIcon />
        </ViewBtn>
        <ViewBtn>
          <PageViewIcon />
        </ViewBtn>
        <ViewBtn>
          <BreakViewIcon />
        </ViewBtn>
        <ZoomSign $ml={7}>−</ZoomSign>
        <Zoom>
          <ZoomKnob />
        </Zoom>
        <ZoomSign>+</ZoomSign>
        <StatusText $ml={18}>100%</StatusText>
      </Status>
    </Page>
  );
}
